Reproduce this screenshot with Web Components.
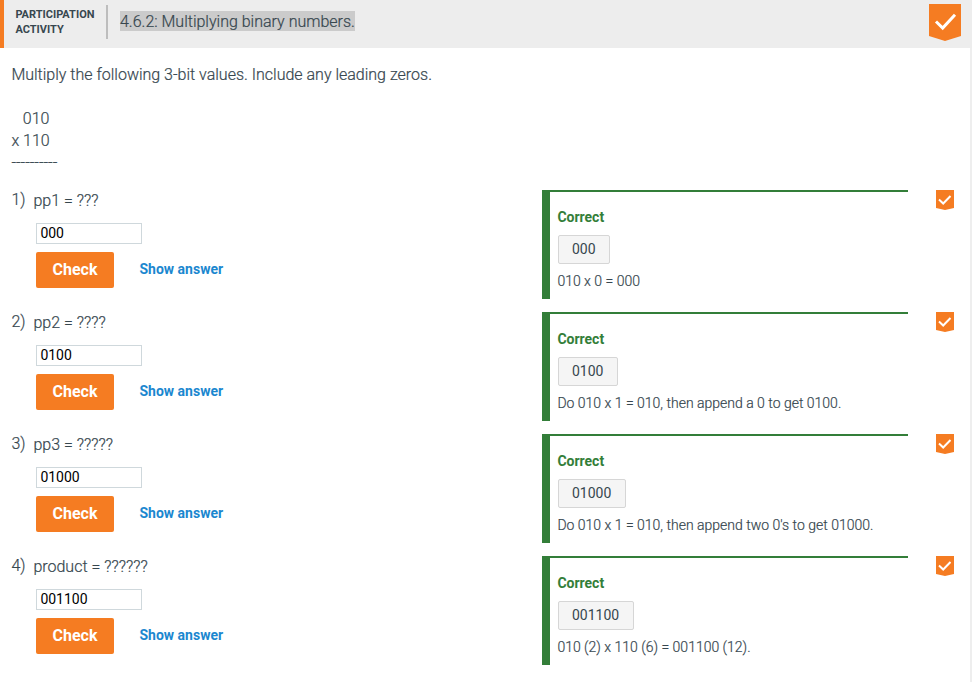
<!DOCTYPE html>
<html lang="en">
<head>
<meta charset="utf-8">
<title>Multiplying binary numbers</title>
<style>
html, body { margin: 0; height: 100%; }
body { background: #fff; color: #37474f; font-family: Roboto, "Liberation Sans", sans-serif; font-weight: 300; font-size: 16px; overflow: hidden; -webkit-text-stroke: 0.2px currentColor; }
</style>
</head>
<body>
<participation-activity>
  <activity-header slot="header" number="4.6.2: Multiplying binary numbers."></activity-header>
  <span slot="intro">Multiply the following 3-bit values. Include any leading zeros.</span>
  <binary-operation slot="intro" top="010" bottom="x 110"></binary-operation>
  <short-answer number="1)" prompt="pp1 = ???" answer="000">010 x 0 = 000</short-answer>
  <short-answer number="2)" prompt="pp2 = ????" answer="0100">Do 010 x 1 = 010, then append a 0 to get 0100.</short-answer>
  <short-answer number="3)" prompt="pp3 = ?????" answer="01000">Do 010 x 1 = 010, then append two 0's to get 01000.</short-answer>
  <short-answer number="4)" prompt="product = ??????" answer="001100">010 (2) x 110 (6) = 001100 (12).</short-answer>
</participation-activity>
<script>
class BaseElement extends HTMLElement {
  render(html) { this.attachShadow({ mode: 'open' }).innerHTML = html; }
  attr(name) { return this.getAttribute(name) || ''; }
}

customElements.define('participation-activity', class extends BaseElement {
  connectedCallback() {
    this.render(`<style>
      :host { display: block; box-sizing: border-box; height: 682px; }
      main { box-sizing: border-box; height: 634px; padding: 16px 0 0 11.4px; border-right: 2px solid #eee; }
      .intro { display: flex; flex-direction: column; height: 126px; line-height: 22px; }
      .questions { display: grid; grid-auto-rows: 122px; }
    </style>
    <slot name="header"></slot>
    <main><div class="intro"><slot name="intro"></slot></div><div class="questions"><slot></slot></div></main>`);
  }
});

customElements.define('activity-header', class extends BaseElement {
  connectedCallback() {
    this.render(`<style>
      :host { display: flex; box-sizing: border-box; height: 48px; background: #ededed; border-left: 4px solid #f57c22; padding: 0 11px 0 11.4px; align-items: flex-start; }
      .type { width: 90.6px; padding-top: 7px; font-weight: 700; font-size: 11px; line-height: 15px; -webkit-text-stroke: 0; }
      .rule { width: 2px; height: 34px; margin-top: 5px; background: #bdbdbd; }
      .title { margin: 11px auto 0 12px; height: 20px; line-height: 22px; background: #cbcbcb; white-space: nowrap; }
      status-chevron { margin-top: 4px; }
    </style>
    <div class="type">PARTICIPATION<br>ACTIVITY</div><div class="rule"></div>
    <div class="title">${this.attr('number')}</div>
    <status-chevron size="large"></status-chevron>`);
  }
});

customElements.define('status-chevron', class extends BaseElement {
  connectedCallback() {
    const large = this.attr('size') === 'large';
    this.render(`<style>:host, svg { display: block; }</style>` + (large
      ? `<svg width="32" height="37" viewBox="0 0 32 37"><path d="M0 0H32V32L16 37L0 32Z" fill="#f57c22"/><path d="M7 17.5L13.7 24L26 10.7" fill="none" stroke="#fff" stroke-width="3"/></svg>`
      : `<svg width="18" height="20" viewBox="0 0 18 20"><path d="M0 0H18V18L9 20L0 18Z" fill="#f57c22"/><path d="M3 9.5L7.2 13.5L14.5 6" fill="none" stroke="#fff" stroke-width="2"/></svg>`));
  }
});

customElements.define('binary-operation', class extends BaseElement {
  connectedCallback() {
    this.render(`<style>
      :host { display: block; margin-top: 22px; line-height: 22px; width: 38px; }
      div { text-align: right; white-space: nowrap; }
      .line { text-align: left; }
    </style>
    <div>${this.attr('top')}</div><div>${this.attr('bottom')}</div><div class="line">----------</div>`);
  }
});

customElements.define('short-answer', class extends BaseElement {
  connectedCallback() {
    this.render(`<style>
      :host { display: grid; grid-template-columns: 22px 508.6px 366px 1fr; height: 109px; }
      .number { line-height: 20px; white-space: nowrap; }
      .prompt { line-height: 22px; white-space: nowrap; }
      .entry { margin-left: 2.6px; }
      .input { box-sizing: border-box; width: 106px; height: 21px; margin-top: 11px; padding-left: 3.4px; border: 1px solid #cfd8dc; font-size: 14px; line-height: 19px; font-weight: 400; color: #000; -webkit-text-stroke: 0; }
      .actions { display: flex; align-items: center; margin-top: 8px; height: 36px; gap: 25.5px; }
      .check { width: 78px; height: 36px; border: 0; border-radius: 2px; padding: 0; background: #f57c22; color: #fff; font: 700 16px/36px Roboto, sans-serif; -webkit-text-stroke: 0; }
      .show { color: #1b87cf; font-weight: 700; font-size: 14px; line-height: 20px; padding-bottom: 2px; -webkit-text-stroke: 0; }
      status-chevron { margin-left: 28px; }
    </style>
    <div class="number">${this.attr('number')}</div>
    <div><div class="prompt">${this.attr('prompt')}</div>
      <div class="entry"><div class="input" role="textbox">${this.attr('answer')}</div>
      <div class="actions"><button class="check">Check</button><span class="show">Show answer</span></div></div></div>
    <answer-explanation answer="${this.attr('answer')}"><slot></slot></answer-explanation>
    <status-chevron></status-chevron>`);
  }
});

customElements.define('answer-explanation', class extends BaseElement {
  connectedCallback() {
    this.render(`<style>
      :host { display: flex; box-sizing: border-box; height: 109px; }
      .bar { width: 8px; background: #337e39; }
      .body { flex: 1; border-top: 2px solid #337e39; padding: 15px 0 0 7.4px; font-size: 14px; }
      .verdict { color: #337e39; font-weight: 700; line-height: 20px; height: 28px; -webkit-text-stroke: 0; }
      .answer { display: block; box-sizing: border-box; width: fit-content; height: 29px; margin-left: 0.6px; line-height: 27px; padding: 0 13.4px 0 13px; border: 1px solid #d6d6d6; border-radius: 2px; background: #f5f5f5; font-weight: 400; -webkit-text-stroke: 0; }
      .text { margin-top: 7px; line-height: 20px; white-space: nowrap; }
    </style>
    <div class="bar"></div><div class="body"><div class="verdict">Correct</div><div class="answer">${this.attr('answer')}</div><div class="text"><slot></slot></div></div>`);
  }
});
</script>
</body>
</html>
